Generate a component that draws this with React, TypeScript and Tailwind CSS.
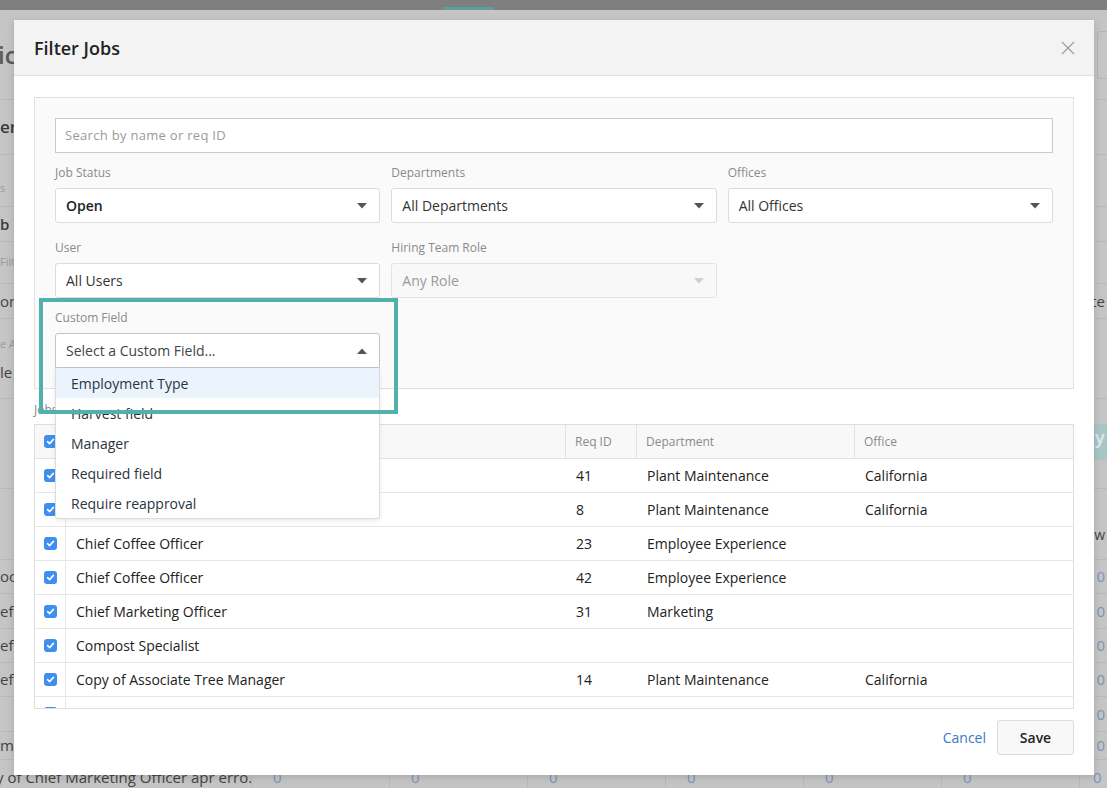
import React from "react";

const font = { fontFamily: '"Open Sans", "Liberation Sans", Arial, sans-serif' };

function Arrow({ up = false, disabled = false }: { up?: boolean; disabled?: boolean }) {
  return (
    <svg width="10" height="6" viewBox="0 0 10 6" className="shrink-0">
      {up ? (
        <path d="M0 6 L5 0.5 L10 6 Z" fill={disabled ? "#cfcfcf" : "#555"} />
      ) : (
        <path d="M0 0 L10 0 L5 5.5 Z" fill={disabled ? "#cfcfcf" : "#555"} />
      )}
    </svg>
  );
}

function Select({ value, bold = false, disabled = false }: { value: string; bold?: boolean; disabled?: boolean }) {
  return (
    <div
      className={
        "h-[35px] rounded-[3px] border flex items-center justify-between pl-[10px] pr-[12px] text-[14px] " +
        (disabled ? "bg-[#f8f8f8] border-[#e3e3e3] text-[#9a9a9a]" : "bg-white border-[#dcdcdc] text-[#333]")
      }
    >
      <span className={bold ? "font-semibold text-[#222]" : ""}>{value}</span>
      <Arrow disabled={disabled} />
    </div>
  );
}

function Label({ children }: { children: React.ReactNode }) {
  return <div className="h-[16px] leading-[16px] text-[12px] text-[#8a8a8a] mb-[7px] mt-[1px]">{children}</div>;
}

function Check() {
  return (
    <span className="inline-flex w-[13px] h-[13px] rounded-[3px] bg-[#3f8ff0] items-center justify-center">
      <svg width="9" height="9" viewBox="0 0 9 9">
        <path d="M1.6 4.7 L3.6 6.6 L7.4 2.4" fill="none" stroke="white" strokeWidth="1.6" strokeLinecap="round" strokeLinejoin="round" />
      </svg>
    </span>
  );
}

const rows: [string, string, string, string][] = [
  ["Associate Tree Manager", "41", "Plant Maintenance", "California"],
  ["Associate Tree Manager", "8", "Plant Maintenance", "California"],
  ["Chief Coffee Officer", "23", "Employee Experience", ""],
  ["Chief Coffee Officer", "42", "Employee Experience", ""],
  ["Chief Marketing Officer", "31", "Marketing", ""],
  ["Compost Specialist", "", "", ""],
  ["Copy of Associate Tree Manager", "14", "Plant Maintenance", "California"],
  ["Copy of Chief Gardener", "15", "Plant Maintenance", "California"],
];

function BgRow({
  h,
  left,
  leftCls = "",
  right,
  rightCls = "",
  border = true,
  align = "items-center",
}: {
  h: string;
  left?: React.ReactNode;
  leftCls?: string;
  right?: React.ReactNode;
  rightCls?: string;
  border?: boolean;
  align?: string;
}) {
  return (
    <div className={h + " flex justify-between " + align + " " + (border ? "border-b border-[#b9b9b9]" : "")}>
      <div className={"whitespace-nowrap " + leftCls}>{left}</div>
      <div className={"whitespace-nowrap pr-[2px] " + rightCls}>{right}</div>
    </div>
  );
}

export default function App() {
  return (
    <div className="relative w-full h-[788px] overflow-hidden bg-[#c5c5c5]" style={font}>
      {/* background page (dimmed) */}
      <div className="h-[10px] bg-[#7f7f7f] flex items-end">
        <div className="ml-[443px] w-[51px] h-[3px] bg-[#5c9fa1]" />
      </div>
      <div className="flex flex-col">
        <div className="h-[90px] flex items-center justify-between border-b border-[#b9b9b9]">
          <span className="text-[24px] text-[#5a5a5a] font-semibold -ml-[2px]">ic</span>
          <div className="w-[10px] h-[48px] border border-[#b3b3b3] border-r-0 rounded-l-[3px]" />
        </div>
        <BgRow h="h-[55px]" left="er" leftCls="text-[17px] font-semibold text-[#3a3a3a]" />
        <BgRow h="h-[16px]" border={false} />
        <BgRow h="h-[36px]" left="s" leftCls="text-[11px] text-[#9a9a9a]" />
        <BgRow h="h-[35px]" left="b" leftCls="text-[15px] font-semibold text-[#3a3a3a]" />
        <BgRow h="h-[42px]" left="Filt" leftCls="text-[11px] text-[#9a9a9a]" />
        <BgRow h="h-[35px]" left="or" leftCls="text-[15px] text-[#444]" right="te" rightCls="text-[15px] text-[#444]" />
        <div className="h-[80px] flex flex-col justify-center gap-[12px] border-b border-[#b9b9b9]">
          <span className="text-[11px] text-[#9a9a9a] leading-[14px]">e A</span>
          <span className="text-[15px] text-[#444] leading-[18px]">le</span>
        </div>
        <div className="h-[25px]" />
        <div className="h-[36px] flex justify-end">
          <div className="w-[13px] h-full bg-[#a9c6c6] text-[#dfeaea] text-[18px] font-semibold pl-[1px]">y</div>
        </div>
        <BgRow h="h-[29px]" border />
        <BgRow h="h-[71px]" align="items-end pb-[14px]" right="w" rightCls="text-[14px] text-[#444]" />
        <BgRow h="h-[34px]" left="oc" leftCls="text-[15px] text-[#444]" right="0" rightCls="text-[15px] text-[#7b96b8]" />
        <BgRow h="h-[35px]" left="ef" leftCls="text-[15px] text-[#444]" right="0" rightCls="text-[15px] text-[#7b96b8]" />
        <BgRow h="h-[34px]" left="ef" leftCls="text-[15px] text-[#444]" right="0" rightCls="text-[15px] text-[#7b96b8]" />
        <BgRow h="h-[34px]" left="ef" leftCls="text-[15px] text-[#444]" right="0" rightCls="text-[15px] text-[#7b96b8]" />
        <BgRow h="h-[35px]" left="" right="0" rightCls="text-[15px] text-[#7b96b8]" />
        <BgRow h="h-[28px]" left="mp" leftCls="text-[15px] text-[#444]" right="0" rightCls="text-[15px] text-[#7b96b8]" />
        <div className="h-[34px] flex items-center text-[15px]">
          <div className="w-[255px] shrink-0 whitespace-nowrap overflow-hidden text-[#444] -ml-[4px]">
            y of Chief Marketing Officer apr erro...
          </div>
          {[0, 1, 2, 3, 4, 5].map((i) => (
            <div key={i} className="w-[138px] shrink-0 h-full border-l border-[#b9b9b9] pl-[21px] flex items-center text-[#7b96b8]">
              0
            </div>
          ))}
          <div className="flex-1 h-full border-l border-[#b9b9b9] pl-[13px] flex items-center text-[#7b96b8]">0</div>
        </div>
      </div>

      {/* modal */}
      <div className="absolute left-[14px] top-[20px] w-[1080px] h-[755px] bg-white flex flex-col shadow-[0_2px_8px_rgba(0,0,0,0.15)]">
        <div className="h-[56px] shrink-0 bg-[#f3f3f3] border-b border-[#e1e1e1] flex items-center justify-between pl-[20px] pr-[19px]">
          <span className="text-[18px] font-semibold text-[#222] mt-[1px]">Filter Jobs</span>
          <svg width="14" height="14" viewBox="0 0 14 14">
            <path d="M1 1 L13 13 M13 1 L1 13" stroke="#9a9a9a" strokeWidth="1.1" />
          </svg>
        </div>

        <div className="px-[20px] pt-[21px] flex flex-col">
          {/* filter panel */}
          <div className="border border-[#e1e1e1] bg-[#fafafa] px-[20px] pt-[20px] pb-[20px]">
            <div className="h-[35px] bg-white border border-[#cbcbcb] flex items-center pl-[9px] pt-[1px] text-[13px] text-[#9b9b9b] tracking-[0.3px]">
              Search by name or req ID
            </div>
            <div className="grid grid-cols-3 gap-x-[11px] mt-[11px]">
              <div>
                <Label>Job Status</Label>
                <Select value="Open" bold />
              </div>
              <div>
                <Label>Departments</Label>
                <Select value="All Departments" />
              </div>
              <div>
                <Label>Offices</Label>
                <Select value="All Offices" />
              </div>
            </div>
            <div className="grid grid-cols-3 gap-x-[11px] mt-[16px]">
              <div>
                <Label>User</Label>
                <Select value="All Users" />
              </div>
              <div>
                <Label>Hiring Team Role</Label>
                <Select value="Any Role" disabled />
              </div>
            </div>
            <div className="grid grid-cols-3 gap-x-[11px] mt-[11px]">
              <div>
                <Label>Custom Field</Label>
                <div className="relative">
                  <div className="h-[35px] rounded-t-[3px] border border-[#c4c4c4] bg-white flex items-center justify-between pl-[10px] pr-[12px] text-[14px] text-[#444]">
                    <span>Select a Custom Field...</span>
                    <Arrow up />
                  </div>
                  <div className="absolute z-10 left-0 right-0 top-full bg-white border border-[#dcdcdc] border-t-0 rounded-b-[3px] shadow-[0_2px_4px_rgba(0,0,0,0.08)] text-[14px] text-[#2c3440]">
                    {["Employment Type", "Harvest field", "Manager", "Required field", "Require reapproval"].map((o, i) => (
                      <div key={o} className={"h-[30px] flex items-center pl-[15px] " + (i === 0 ? "bg-[#ebf3fd]" : "")}>
                        {o}
                      </div>
                    ))}
                  </div>
                </div>
              </div>
            </div>
          </div>

          <div className="mt-[13px] mb-[6px] h-[16px] leading-[16px] text-[12px] text-[#8a8a8a]">Jobs</div>

          {/* table */}
          <div className="h-[285px] border border-[#dedede] overflow-hidden">
            <div className="grid grid-cols-[31px_500px_71px_218px_1fr] h-[34px] bg-[#f8f8f8] border-b border-[#e2e2e2] text-[12px] text-[#8a8a8a]">
              <div className="flex items-center justify-center border-r border-[#e2e2e2]">
                <Check />
              </div>
              <div className="border-r border-[#e2e2e2]" />
              <div className="flex items-center pl-[9px] border-r border-[#e2e2e2]">Req ID</div>
              <div className="flex items-center pl-[9px] border-r border-[#e2e2e2]">Department</div>
              <div className="flex items-center pl-[9px]">Office</div>
            </div>
            {rows.map((r, i) => (
              <div
                key={i}
                className="grid grid-cols-[31px_500px_71px_218px_1fr] h-[34px] border-b border-[#e6e6e6] text-[14px] text-[#222]"
              >
                <div className="flex items-center justify-center border-r border-[#e6e6e6]">
                  <Check />
                </div>
                <div className="flex items-center pl-[10px]">{r[0]}</div>
                <div className="flex items-center pl-[10px]">{r[1]}</div>
                <div className="flex items-center pl-[10px]">{r[2]}</div>
                <div className="flex items-center pl-[10px]">{r[3]}</div>
              </div>
            ))}
          </div>

          {/* footer */}
          <div className="mt-[11px] flex justify-end items-center">
            <span className="text-[14px] text-[#3a78c4] mr-[11px]">Cancel</span>
            <div className="w-[77px] h-[35px] rounded-[3px] border border-[#dcdcdc] bg-[#f8f8f8] flex items-center justify-center text-[14px] font-semibold text-[#222]">
              Save
            </div>
          </div>
        </div>

        {/* teal highlight */}
        <div className="absolute z-20 pointer-events-none left-[25px] top-[278px] w-[359px] h-[116px] border-4 border-[#4fb0ae]" />
      </div>
    </div>
  );
}
